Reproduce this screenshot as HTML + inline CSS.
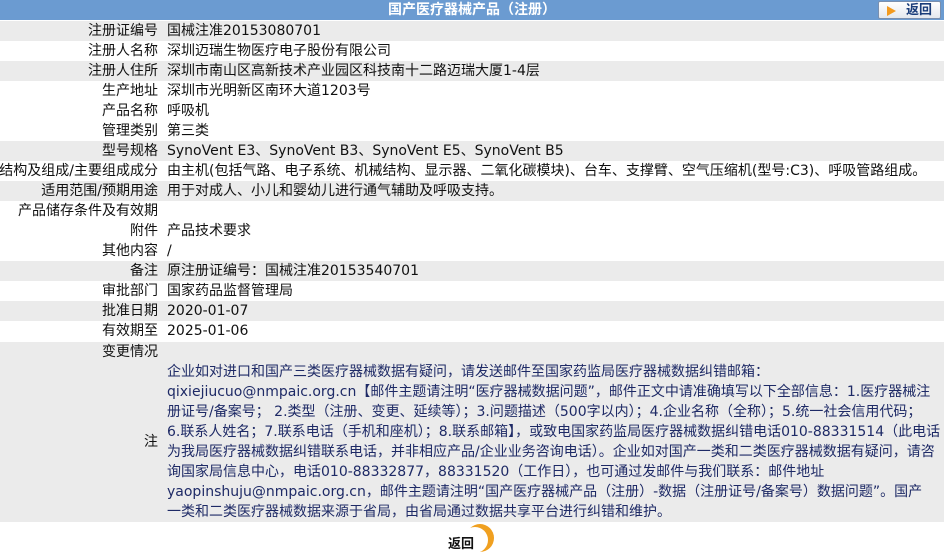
<!DOCTYPE html>
<html><head><meta charset="utf-8"><style>
body{margin:0;width:944px;height:550px;overflow:hidden;background:#fff;font-family:"DejaVu Sans","WenQuanYi Zen Hei","Noto Sans CJK SC",sans-serif;font-size:14px;color:#111;position:relative}
.hdr{position:absolute;left:0;top:0;width:944px;height:20px;background:#6b9bd1;color:#fff;font-weight:bold;font-size:14px;text-align:center;line-height:20px}
.btn{position:absolute;left:878px;top:1px;width:63px;height:18px;background:linear-gradient(#fff,#e4e8ee);border:1px solid #7a8fae;border-radius:2px;font-size:13px;font-weight:bold;color:#1a3d7a;line-height:18px;text-align:right;padding-right:8px;box-sizing:border-box}
.btn:before{content:"";position:absolute;left:8px;top:4px;width:0;height:0;border-left:9px solid #f39a1e;border-top:5px solid transparent;border-bottom:5px solid transparent}
.r{position:absolute;left:0;width:944px;height:20px;line-height:20px}
.g{background:#ebebeb}
.l{position:absolute;right:786px;white-space:nowrap}
.v{position:absolute;left:167px;white-space:nowrap}
.note{position:absolute;left:0;top:342px;width:944px;height:180px;background:#ebebeb}
.nt{position:absolute;left:167px;top:20px;line-height:20px;color:#1e2a66;white-space:nowrap;font-size:14px}
.bot{position:absolute;left:448px;top:533px;font-weight:bold;font-size:13px;z-index:2}
.circ{position:absolute;left:466px;top:524px;width:28px;height:28px;border-radius:50%;background:#f0a020}
.circ:after{content:"";position:absolute;left:-4px;top:3px;width:26px;height:26px;border-radius:50%;background:#fff}
</style></head><body>
<div class="hdr">国产医疗器械产品（注册）</div>
<div class="btn">返回</div>
<div class="r g" style="top:21px"><span class="l">注册证编号</span><span class="v">国械注准20153080701</span></div>
<div class="r" style="top:41px"><span class="l">注册人名称</span><span class="v">深圳迈瑞生物医疗电子股份有限公司</span></div>
<div class="r g" style="top:61px"><span class="l">注册人住所</span><span class="v">深圳市南山区高新技术产业园区科技南十二路迈瑞大厦1-4层</span></div>
<div class="r" style="top:81px"><span class="l">生产地址</span><span class="v">深圳市光明新区南环大道1203号</span></div>
<div class="r" style="top:101px"><span class="l">产品名称</span><span class="v">呼吸机</span></div>
<div class="r" style="top:121px"><span class="l">管理类别</span><span class="v">第三类</span></div>
<div class="r g" style="top:141px"><span class="l">型号规格</span><span class="v">SynoVent E3、SynoVent B3、SynoVent E5、SynoVent B5</span></div>
<div class="r" style="top:161px"><span class="l">结构及组成/主要组成成分</span><span class="v">由主机(包括气路、电子系统、机械结构、显示器、二氧化碳模块)、台车、支撑臂、空气压缩机(型号:C3)、呼吸管路组成。</span></div>
<div class="r g" style="top:181px"><span class="l">适用范围/预期用途</span><span class="v">用于对成人、小儿和婴幼儿进行通气辅助及呼吸支持。</span></div>
<div class="r" style="top:201px"><span class="l">产品储存条件及有效期</span></div>
<div class="r" style="top:221px"><span class="l">附件</span><span class="v">产品技术要求</span></div>
<div class="r" style="top:241px"><span class="l">其他内容</span><span class="v">/</span></div>
<div class="r g" style="top:261px"><span class="l">备注</span><span class="v">原注册证编号：国械注准20153540701</span></div>
<div class="r" style="top:281px"><span class="l">审批部门</span><span class="v">国家药品监督管理局</span></div>
<div class="r g" style="top:301px"><span class="l">批准日期</span><span class="v">2020-01-07</span></div>
<div class="r" style="top:321px"><span class="l">有效期至</span><span class="v">2025-01-06</span></div>
<div class="note">
<div class="r" style="top:0"><span class="l">变更情况</span></div>
<div class="r" style="top:90px"><span class="l">注</span></div>
<div class="nt">企业如对进口和国产三类医疗器械数据有疑问，请发送邮件至国家药监局医疗器械数据纠错邮箱：<br>qixiejiucuo@nmpaic.org.cn【邮件主题请注明“医疗器械数据问题”，邮件正文中请准确填写以下全部信息：1.医疗器械注<br>册证号/备案号； 2.类型（注册、变更、延续等）；3.问题描述（500字以内）；4.企业名称（全称）；5.统一社会信用代码；<br>6.联系人姓名；7.联系电话（手机和座机）；8.联系邮箱】，或致电国家药监局医疗器械数据纠错电话010-88331514（此电话<br>为我局医疗器械数据纠错联系电话，并非相应产品/企业业务咨询电话）。企业如对国产一类和二类医疗器械数据有疑问，请咨<br>询国家局信息中心，电话010-88332877，88331520（工作日），也可通过发邮件与我们联系：邮件地址<br>yaopinshuju@nmpaic.org.cn，邮件主题请注明“国产医疗器械产品（注册）-数据（注册证号/备案号）数据问题”。国产<br>一类和二类医疗器械数据来源于省局，由省局通过数据共享平台进行纠错和维护。</div>
</div>
<div class="circ"></div>
<div class="bot">返回</div>
</body></html>
